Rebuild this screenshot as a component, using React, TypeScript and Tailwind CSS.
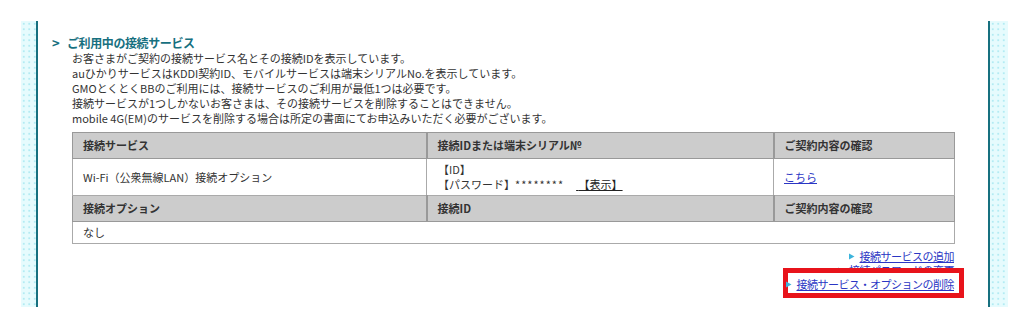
import React from "react";

const Dotted = ({ w }: { w: string }) => (
  <div
    className={`${w} h-full bg-[#e6fbfd] bg-[radial-gradient(circle,#b3ebf3_1px,transparent_1.3px)] bg-[length:5.5px_5.5px]`}
  />
);

const Arrow = () => (
  <svg width="6" height="7" viewBox="0 0 6 7" className="mr-[5px] shrink-0">
    <polygon points="0,0.5 5.5,3.5 0,6.5" fill="#3cb4dc" />
  </svg>
);

const LinkLine = ({ text, className = "" }: { text: string; className?: string }) => (
  <div className={`flex items-center h-[14px] ${className}`}>
    <Arrow />
    <a href="#" className="text-[#2b36c4] underline underline-offset-[1px] tracking-[-0.5px]">
      {text}
    </a>
  </div>
);

export default function App() {
  return (
    <div className="w-[1011px] h-[319px] bg-white pt-[21px] pl-[21px] font-['Noto_Sans_CJK_JP','Noto_Sans',sans-serif] text-[11px] text-[#333]">
      <div className="flex h-[286px] w-[987px]">
        <Dotted w="w-[15px]" />
        <div className="w-[2px] h-full bg-[#17707f]" />
        <main className="w-[950px] pl-[14px] pt-[14px] pr-[34px]">
          <h2 className="flex items-center h-[16px] text-[12px] font-bold text-[#17707f] leading-[16px] tracking-[-0.4px]">
            <span className="w-[15px] text-[13px]">&gt;</span>
            <span>ご利用中の接続サービス</span>
          </h2>
          <div className="ml-[20px]">
            <div className="leading-[15px]">
              <p>お客さまがご契約の接続サービス名とその接続IDを表示しています。</p>
              <p>auひかりサービスはKDDI契約ID、モバイルサービスは端末シリアルNo.を表示しています。</p>
              <p>GMOとくとくBBのご利用には、接続サービスのご利用が最低1つは必要です。</p>
              <p>接続サービスが1つしかないお客さまは、その接続サービスを削除することはできません。</p>
              <p>mobile 4G(EM)のサービスを削除する場合は所定の書面にてお申込みいただく必要がございます。</p>
            </div>
            <table className="mt-[6px] w-[882px] table-fixed border-collapse border border-[#999]">
              <colgroup>
                <col className="w-[354px]" />
                <col className="w-[347px]" />
                <col className="w-[181px]" />
              </colgroup>
              <tbody>
                <tr className="h-[26px] bg-[#cccccc] font-bold">
                  <td className="px-[10px] border-y border-[#999] border-r-2 border-r-[#999]">接続サービス</td>
                  <td className="px-[10px] border-y border-[#999] border-r-2 border-r-[#999]">接続IDまたは端末シリアル№</td>
                  <td className="px-[10px] border-y border-[#999]">ご契約内容の確認</td>
                </tr>
                <tr className="h-[37px]">
                  <td className="px-[10px] border border-[#aaa]">Wi-Fi（公衆無線LAN）接続オプション</td>
                  <td className="px-[11px] border border-[#aaa] leading-[15px]">
                    <div>【ID】</div>
                    <div>
                      【パスワード】<span className="tracking-[1px]">********</span>
                      <a href="#" className="ml-[12px] text-[#222] underline">
                        {"\u00a0"}【表示】
                      </a>
                    </div>
                  </td>
                  <td className="px-[10px] border border-[#aaa]">
                    <a href="#" className="text-[#2b36c4] underline">こちら</a>
                  </td>
                </tr>
                <tr className="h-[26px] bg-[#cccccc] font-bold">
                  <td className="px-[10px] border-y border-[#999] border-r-2 border-r-[#999]">接続オプション</td>
                  <td className="px-[10px] border-y border-[#999] border-r-2 border-r-[#999]">接続ID</td>
                  <td className="px-[10px] border-y border-[#999]">ご契約内容の確認</td>
                </tr>
                <tr className="h-[22px]">
                  <td colSpan={3} className="px-[10px] border border-[#aaa]">なし</td>
                </tr>
              </tbody>
            </table>
            <div className="relative mt-[5px] flex flex-col items-end">
              <LinkLine text="接続サービスの追加" />
              <LinkLine text="接続パスワードの変更" />
              <LinkLine text="接続サービス・オプションの削除" className="relative z-10" />
              <div className="absolute left-[711px] top-[19px] w-[181px] h-[30px] border-[5px] border-[#e8131b] bg-white" />
            </div>
          </div>
        </main>
        <div className="w-[2px] h-full bg-[#17707f]" />
        <Dotted w="w-[18px]" />
      </div>
    </div>
  );
}
